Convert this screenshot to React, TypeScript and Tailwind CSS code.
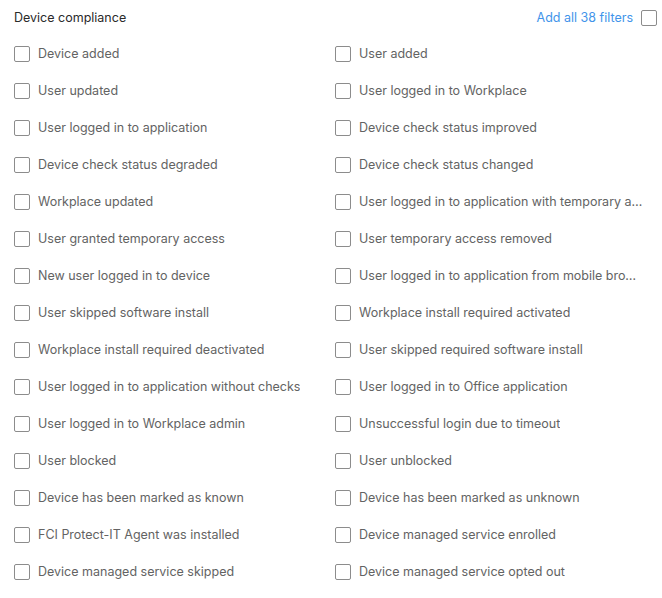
import React, { useState } from "react";

const left = [
    "Device added",
    "User updated",
    "User logged in to application",
    "Device check status degraded",
    "Workplace updated",
    "User granted temporary access",
    "New user logged in to device",
    "User skipped software install",
    "Workplace install required deactivated",
    "User logged in to application without checks",
    "User logged in to Workplace admin",
    "User blocked",
    "Device has been marked as known",
    "FCI Protect-IT Agent was installed",
    "Device managed service skipped",
];

const right = [
    "User added",
    "User logged in to Workplace",
    "Device check status improved",
    "Device check status changed",
    "User logged in to application with temporary access",
    "User temporary access removed",
    "User logged in to application from mobile browser",
    "Workplace install required activated",
    "User skipped required software install",
    "User logged in to Office application",
    "Unsuccessful login due to timeout",
    "User unblocked",
    "Device has been marked as unknown",
    "Device managed service enrolled",
    "Device managed service opted out",
];

const Box = ({ checked }: { checked: boolean }) => (
    <span
        className={`w-4 h-4 shrink-0 rounded-[2px] border flex items-center justify-center ${
            checked ? "bg-[#3d8fe0] border-[#3d8fe0]" : "bg-white border-[#8c8c8c]"
        }`}
    >
        {checked && (
            <svg width="10" height="10" viewBox="0 0 10 10" fill="none">
                <path d="M1.5 5.2 4 7.5 8.5 2.5" stroke="white" strokeWidth="1.6" />
            </svg>
        )}
    </span>
);

export default function App() {
    const [checked, setChecked] = useState<Record<string, boolean>>({});
    const toggle = (k: string) => setChecked((p) => ({ ...p, [k]: !p[k] }));

    const rows: string[] = [];
    left.forEach((l, i) => {
        rows.push(l);
        rows.push(right[i]);
    });

    return (
        <div
            className="w-[662px] bg-white text-[12.5px] leading-[16px] text-[#636363] pl-[14px] pt-px"
            style={{ fontFamily: "Inter, 'Liberation Sans', sans-serif" }}
        >
            <div className="h-[34px] flex items-center justify-between pr-[5px]">
                <span className="text-[#2a2a2a]">Device compliance</span>
                <div className="flex items-center gap-2">
                    <button type="button" className="text-[#4294ea]">
                        Add all 38 filters
                    </button>
                    <Box checked={false} />
                </div>
            </div>
            <div className="grid grid-cols-[321px_311px] auto-rows-[37px]">
                {rows.map((r) => (
                    <label key={r} className="flex items-center gap-2 min-w-0 cursor-pointer" onClick={() => toggle(r)}>
                        <Box checked={!!checked[r]} />
                        <span className="truncate">{r}</span>
                    </label>
                ))}
            </div>
        </div>
    );
}
